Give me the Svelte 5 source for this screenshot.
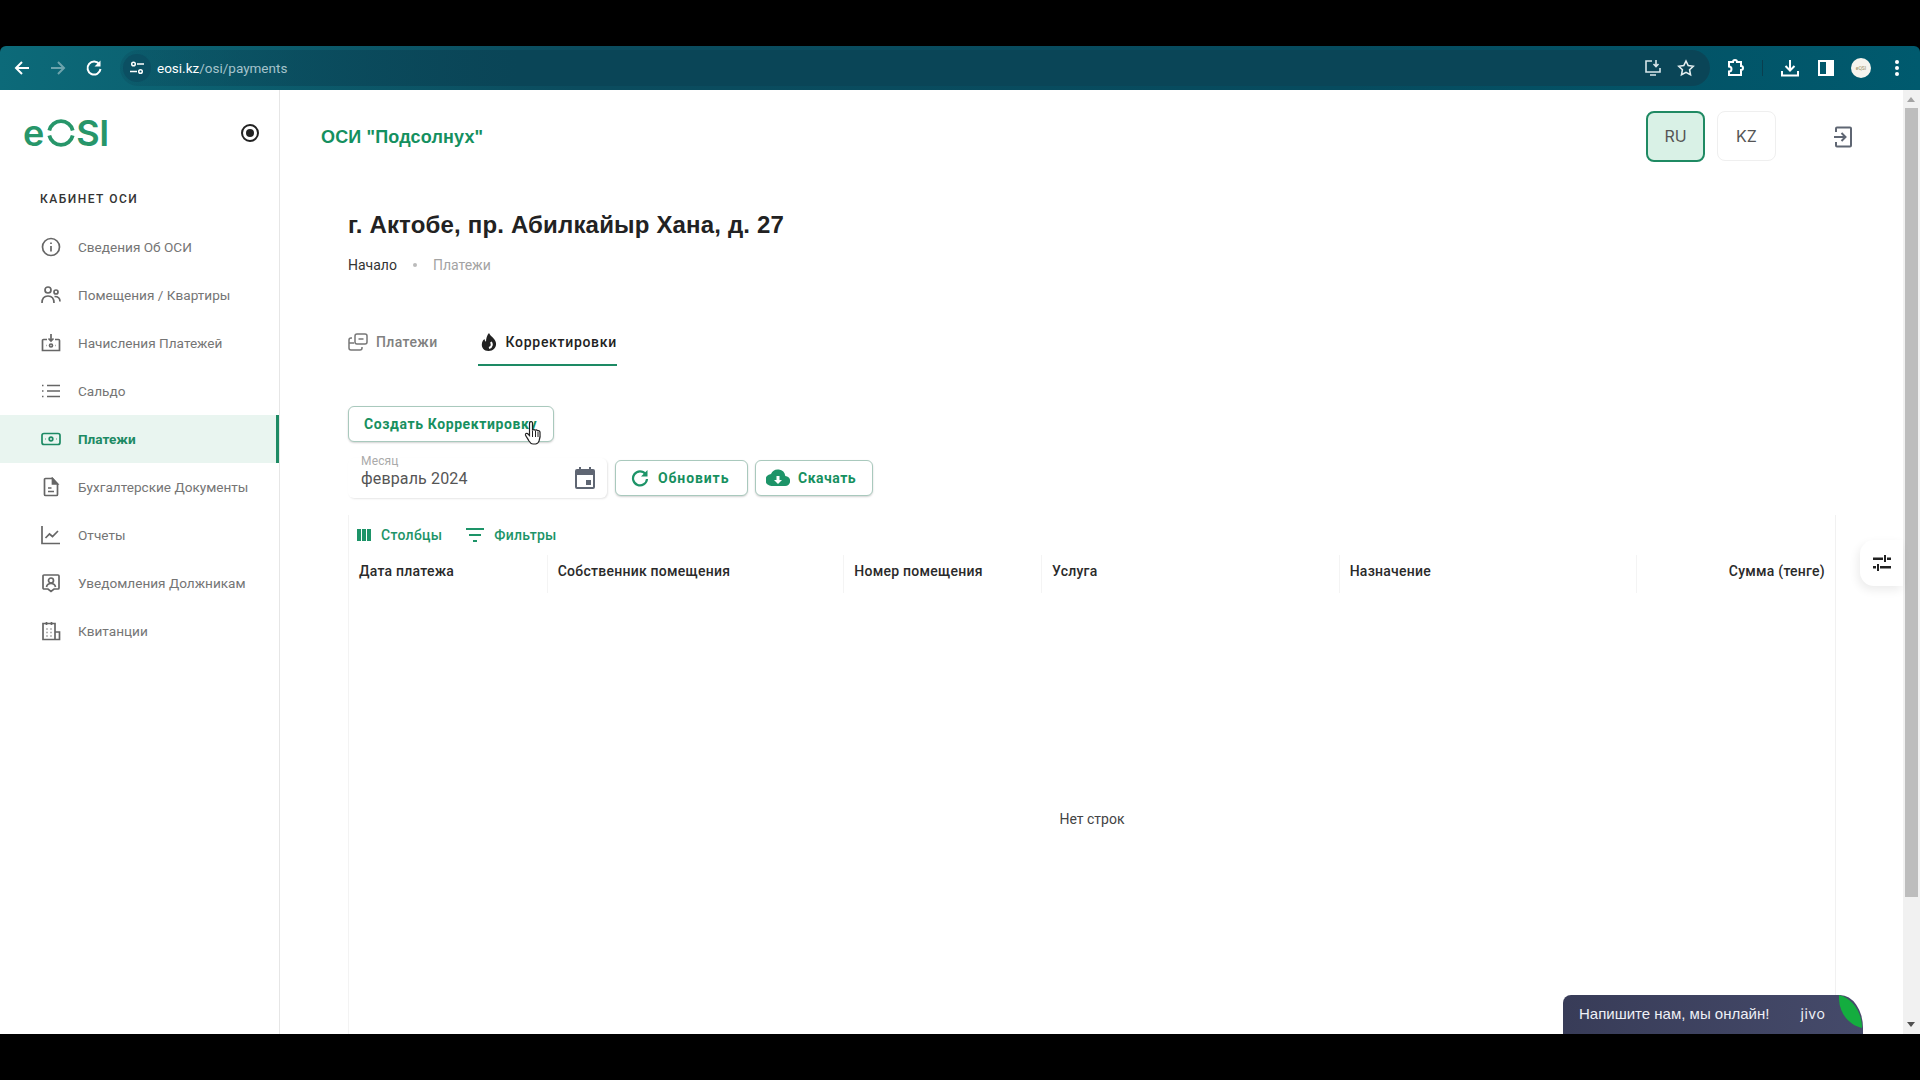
<script>
  const navItems = [
    { label: 'Сведения Об ОСИ', icon: 'info' },
    { label: 'Помещения / Квартиры', icon: 'people' },
    { label: 'Начисления Платежей', icon: 'accrual' },
    { label: 'Сальдо', icon: 'list' },
    { label: 'Платежи', icon: 'money', active: true },
    { label: 'Бухгалтерские Документы', icon: 'doc' },
    { label: 'Отчеты', icon: 'chart' },
    { label: 'Уведомления Должникам', icon: 'notice' },
    { label: 'Квитанции', icon: 'receipt' }
  ];

  const columns = [
    { label: 'Дата платежа', width: 199 },
    { label: 'Собственник помещения', width: 297 },
    { label: 'Номер помещения', width: 198 },
    { label: 'Услуга', width: 298 },
    { label: 'Назначение', width: 298 },
    { label: 'Сумма (тенге)', width: 198, right: true }
  ];
</script>

<div class="screen">
  <div class="letterbox"></div>

  <div class="chrome">
    <div class="nav-btns">
      <svg width="18" height="18" viewBox="0 0 18 18"><path d="M16 9H3M9 3 3 9l6 6" fill="none" stroke="#fff" stroke-width="2"/></svg>
      <svg class="dim" width="18" height="18" viewBox="0 0 18 18"><path d="M2 9h13M9 3l6 6-6 6" fill="none" stroke="#fff" stroke-width="2"/></svg>
      <svg width="18" height="18" viewBox="0 0 18 18"><path d="M14.5 5.5A6.5 6.5 0 1 0 15.5 10" fill="none" stroke="#fff" stroke-width="2"/><path d="M15.5 1.5v6h-6z" fill="#fff"/></svg>
    </div>
    <div class="omnibox">
      <span class="site-chip">
        <svg width="14" height="14" viewBox="0 0 14 14" fill="none" stroke="#fff" stroke-width="1.5"><circle cx="3.5" cy="3" r="1.8"/><path d="M7 3h7M0 10.500h7"/><circle cx="10.500" cy="10.500" r="1.800"/></svg>
      </span>
      <span class="url"><b>eosi.kz</b>/osi/payments</span>
      <div class="omni-right">
        <svg width="18" height="18" viewBox="0 0 18 18" fill="none" stroke="#d8e6ea" stroke-width="1.600"><path d="M8 2H2v11h14V9M6 16h6M12 1v6M9.500 5l2.500 2.500L14.500 5"/></svg>
        <svg width="18" height="18" viewBox="0 0 18 18" fill="none" stroke="#e4eef0" stroke-width="1.600"><path d="m9 2 2.200 4.600 5 .7-3.600 3.500.9 5L9 13.400l-4.500 2.400.9-5-3.600-3.500 5-.7z"/></svg>
      </div>
    </div>
    <div class="chrome-right">
      <svg width="18" height="18" viewBox="0 0 18 18" fill="none" stroke="#fff" stroke-width="2"><path d="M2 3h4a2 2 0 0 1 4 0h4v4a2 2 0 0 1 0 4v5H2v-3.500a2 2 0 0 0 0-5z" transform="translate(1 0)"/></svg>
      <span class="chrome-sep"></span>
      <svg width="18" height="18" viewBox="0 0 18 18" fill="none" stroke="#fff" stroke-width="2"><path d="M9 1v10M4.500 7 9 11.500 13.500 7M1 12v4.500h16V12"/></svg>
      <svg class="panel-icon" width="16" height="16" viewBox="0 0 16 16"><path d="M1 1h14v14H1z" fill="none" stroke="#fff" stroke-width="2"/><path d="M8 1h7v14H8z" fill="#fff"/></svg>
      <span class="avatar">eQSI</span>
      <svg class="kebab" width="4" height="16" viewBox="0 0 4 16" fill="#fff"><circle cx="2" cy="2" r="2"/><circle cx="2" cy="8" r="2"/><circle cx="2" cy="14" r="2"/></svg>
    </div>
  </div>

  <div class="app">
    <aside class="sidebar">
      <div class="brand">
        <div class="logo">
          <span>e</span>
          <svg width="28" height="28" viewBox="0 0 28 28" fill="none" stroke="#27966a" stroke-width="3.800"><path d="M2.300 11.500A12 12 0 0 1 25.700 11.500M25.700 16.500A12 12 0 0 1 2.300 16.500"/></svg>
          <span>SI</span>
        </div>
        <span class="toggle"><i></i></span>
      </div>
      <div class="section-title">КАБИНЕТ ОСИ</div>
      <nav>
        {#each navItems as item}
          <div class="nav-item" class:active={item.active}>
            <svg class="nav-icon" width="20" height="20" viewBox="0 0 20 20" fill="none" stroke="currentColor" stroke-width="1.700">
              {#if item.icon === 'info'}
                <circle cx="10" cy="10" r="8.500"/><path d="M10 9v5.500M10 5.500v1.500"/>
              {:else if item.icon === 'people'}
                <circle cx="7" cy="5" r="3"/><circle cx="15" cy="7" r="2"/><path d="M1 18c0-4.500 2.500-7 6-7s6 2.500 6 7M13.500 11.500c3 0 5.500 1.500 5.500 5"/>
              {:else if item.icon === 'accrual'}
                <path d="M6 6.500H2.500a1 1 0 0 0-1 1v10h17v-10a1 1 0 0 0-1-1H14M10 1v7M7.500 5.500 10 8l2.500-2.500"/><circle cx="10" cy="12.500" r="1.500"/><path d="M5 12.500h.5M14.500 12.500h.5"/>
              {:else if item.icon === 'list'}
                <path d="M6 4.500h13M6 10h13M6 15.500h13M1 4.500h1.500M1 10h1.500M1 15.500h1.500"/>
              {:else if item.icon === 'money'}
                <rect x="1" y="4.500" width="18" height="11" rx="2"/><circle cx="10" cy="10" r="1.800"/><path d="M4.500 10H5M15 10h.5"/>
              {:else if item.icon === 'doc'}
                <path d="M3.500 2.500a1 1 0 0 1 1-1h7L16.500 7v10.500a1 1 0 0 1-1 1h-11a1 1 0 0 1-1-1zM7 11h3.500M7 14.500h6"/><path d="M11.500 1.500 16.500 7h-5z" fill="currentColor"/>
              {:else if item.icon === 'chart'}
                <path d="M1 1v17.500h18M4.500 13l4-4 3 2.500L17 6"/>
              {:else if item.icon === 'notice'}
                <path d="M3 2h14a1 1 0 0 1 1 1v12a1 1 0 0 1-1 1h-4l-3 2.500L7 16H3a1 1 0 0 1-1-1V3a1 1 0 0 1 1-1z"/><circle cx="10" cy="7.500" r="2.500"/><path d="M5.500 14c.5-2.500 2-3.500 4.500-3.500s4 1 4.500 3.500"/>
              {:else}
                <path d="M2 2.500h12v16H2zM5.500 1v3M10.500 1v3M14 11h4.500v7.500H14M5.500 8h1M9.500 8h1M5.500 11.500h1M9.500 11.500h1M5.500 15h1M9.500 15h1"/>
              {/if}
            </svg>
            <span>{item.label}</span>
          </div>
        {/each}
      </nav>
    </aside>

    <main class="content">
      <header class="topbar">
        <div class="org">ОСИ "Подсолнух"</div>
        <div class="langs">
          <button class="lang selected">RU</button>
          <button class="lang">KZ</button>
        </div>
        <svg class="logout" width="20" height="22" viewBox="0 0 20 22" fill="none" stroke="#5f6673" stroke-width="2"><path d="M3 6V2.500a1 1 0 0 1 1-1h13a1 1 0 0 1 1 1v17a1 1 0 0 1-1 1H4a1 1 0 0 1-1-1V16M1 11h11M8.500 7l4 4-4 4"/></svg>
      </header>

      <div class="page">
        <h1>г. Актобе, пр. Абилкайыр Хана, д. 27</h1>
        <div class="crumbs">
          <span>Начало</span>
          <i></i>
          <span class="muted">Платежи</span>
        </div>

        <div class="tabs">
          <div class="tab">
            <svg width="20" height="20" viewBox="0 0 20 20" fill="none" stroke="#777" stroke-width="1.500"><rect x="7" y="2" width="12" height="10" rx="2"/><path d="M10.500 7h5M4 6H3a2 2 0 0 0-2 2v8a2 2 0 0 0 2 2h9a2 2 0 0 0 2-2v-1M1 11h5"/></svg>
            <span>Платежи</span>
          </div>
          <div class="tab current">
            <svg width="18" height="20" viewBox="0 0 18 20"><path d="M9 1c1 3 6 5 7 10 .6 4.500-3 8-7.500 8S1 15.500 2 11c.4-1.800 1.400-3.200 2.500-4 .2 1.500.8 2.300 1.500 2.800C6 6.500 7 3 9 1z" fill="#222"/><path d="M11 10c1 2 1.500 5-2 6" fill="none" stroke="#fff" stroke-width="2"/></svg>
            <span>Корректировки</span>
          </div>
        </div>

        <button class="btn create">Создать Корректировку</button>

        <div class="filters">
          <div class="date-field">
            <label for="month">Месяц</label>
            <span id="month">февраль 2024</span>
            <svg width="20" height="22" viewBox="0 0 20 22"><path d="M2 3h16a1 1 0 0 1 1 1v16a1 1 0 0 1-1 1H2a1 1 0 0 1-1-1V4a1 1 0 0 1 1-1z" fill="none" stroke="#5f6673" stroke-width="2"/><path d="M1 3h18v5H1zM4 0h2v4H4zM14 0h2v4h-2zM11 13h5v5h-5z" fill="#5f6673"/></svg>
          </div>
          <button class="btn refresh">
            <svg width="18" height="18" viewBox="0 0 18 18"><path d="M14.500 5A7 7 0 1 0 16 10" fill="none" stroke="#1d9468" stroke-width="2.200"/><path d="M16.500 1v6.500H10z" fill="#1d9468"/></svg>
            Обновить
          </button>
          <button class="btn download">
            <svg width="24" height="18" viewBox="0 0 24 18"><path d="M19.300 7A7.500 7.500 0 0 0 5 5 6 6 0 0 0 6 17h13a5 5 0 0 0 .3-10z" fill="#1d9468"/><path d="M10.500 7h3v4h2.500L12 15l-4-4h2.500z" fill="#fff"/></svg>
            Скачать
          </button>
        </div>

        <div class="grid">
          <div class="toolbar">
            <span class="tool">
              <svg width="14" height="12" viewBox="0 0 14 12" fill="#1d9468"><path d="M0 0h4v12H0zM5 0h4v12H5zM10 0h4v12h-4z"/></svg>
              Столбцы
            </span>
            <span class="tool">
              <svg width="18" height="14" viewBox="0 0 18 14" fill="#1d9468"><path d="M0 0h18v2H0zM3 6h12v2H3zM7 12h4v2H7z"/></svg>
              Фильтры
            </span>
          </div>
          <div class="grid-head">
            {#each columns as col}
              <div class="col" class:right={col.right} style="width: {col.width}px">{col.label}</div>
            {/each}
          </div>
          <div class="grid-body">Нет строк</div>
        </div>
      </div>
    </main>

    <div class="scrollbar">
      <span class="arrow up"></span>
      <span class="thumb"></span>
      <span class="arrow down"></span>
    </div>

    <div class="settings-tab">
      <svg width="18" height="16" viewBox="0 0 18 16" fill="#222"><path d="M0 2.500h10v2.500H0zM14 2.500h4v2.500h-4zM11 0h2v7h-2zM0 11h3v2.500H0zM7 11h11v2.500H7zM4 9h2v7H4z"/></svg>
    </div>

    <div class="jivo">
      <span>Напишите нам, мы онлайн!</span>
      <span class="jivo-logo">jivo</span>
      <svg class="leaf" width="24" height="40" viewBox="0 0 24 40"><path d="M0 0C13 3 23 17 23 33 10 30-1 18 0 0z" fill="#14ad3f"/></svg>
    </div>

    <svg class="cursor" width="20" height="26" viewBox="0 0 20 26"><path d="M6 2c1.200-1 2.500 0 2.500 1v7c1-.6 2-.6 2.600.2 1-.5 1.900-.3 2.400.5 1-.3 2.300.2 2.500 1.500.3 2.500.2 5.500-.8 8.300-.3 1.500-1.500 3-3.500 3.500H9c-2 0-3-1.300-4-3-1-2-3-4.500-3.500-6-.4-1.300 1-2 2-1.400l2 1.900V3.500C5.500 3 5.600 2.400 6 2z" fill="#fff" stroke="#222" stroke-width="1.200"/><path d="M8.500 11v6M11.500 11v6M14 12v5" stroke="#222" fill="none"/></svg>
  </div>

  <div class="letterbox"></div>
</div>

<style>
  :global(body) {
    margin: 0;
    background: #000;
  }

  .screen {
    width: 1920px;
    height: 1080px;
    display: flex;
    flex-direction: column;
    overflow: hidden;
    font-family: Roboto, "Liberation Sans", sans-serif;
  }

  .letterbox {
    height: 46px;
    background: #000;
    flex: none;
  }

  .chrome {
    height: 44px;
    flex: none;
    display: flex;
    align-items: center;
    background: linear-gradient(90deg, #0c6a79 0%, #0b4c5e 30%, #064b5e 70%, #005a6e 100%);
    border-top-left-radius: 6px;
    border-top-right-radius: 6px;
  }

  .nav-btns {
    display: flex;
    gap: 18px;
    padding-left: 13px;
    width: 107px;
  }

  .nav-btns .dim {
    opacity: .4;
  }

  .omnibox {
    width: 1590px;
    height: 36px;
    border-radius: 18px;
    display: flex;
    align-items: center;
    background: linear-gradient(90deg, rgba(10, 69, 87, .25), #0a4557 25%);
    color: #fff;
  }

  .site-chip {
    width: 28px;
    height: 28px;
    margin-left: 3px;
    border-radius: 50%;
    background: #0b4f62;
    display: flex;
    align-items: center;
    justify-content: center;
  }

  .url {
    margin-left: 6px;
    font-size: 13.5px;
    color: #a5c3cc;
  }

  .url b {
    font-weight: 400;
    color: #fff;
  }

  .omni-right {
    margin-left: auto;
    display: flex;
    gap: 15px;
    padding-right: 15px;
  }

  .chrome-right {
    display: flex;
    align-items: center;
    margin-left: 16px;
    gap: 19px;
  }

  .chrome-sep {
    width: 1px;
    height: 16px;
    background: #0a3f4f;
    margin: 0 -1px;
  }

  .panel-icon {
    margin: 0 -2px 0 0;
  }

  .kebab {
    margin-left: 5px;
  }

  .avatar {
    width: 20px;
    height: 20px;
    border-radius: 50%;
    background: #f6f4ee;
    color: #9a8f60;
    font-size: 5px;
    display: flex;
    align-items: center;
    justify-content: center;
  }

  .app {
    position: relative;
    height: 944px;
    flex: none;
    display: flex;
    background: #fff;
    overflow: hidden;
  }

  .sidebar {
    width: 279px;
    flex: none;
    border-right: 1px solid #e6e6e6;
  }

  .brand {
    display: flex;
    align-items: center;
    justify-content: space-between;
    padding: 25px 20px 0 23px;
    height: 36px;
  }

  .logo {
    display: flex;
    align-items: center;
    gap: 3px;
    color: #27966a;
    font-family: Inter, sans-serif;
    font-size: 36px;
    font-weight: 600;
    line-height: 36px;
    height: 36px;
  }

  .logo span:last-child {
    margin-left: -2px;
    letter-spacing: -.5px;
  }

  .toggle {
    width: 14px;
    height: 14px;
    border: 2px solid #222;
    border-radius: 50%;
    display: flex;
    align-items: center;
    justify-content: center;
  }

  .toggle i {
    width: 8px;
    height: 8px;
    background: #222;
    border-radius: 50%;
  }

  .section-title {
    margin: 38px 0 0 40px;
    height: 20px;
    font-size: 12px;
    font-weight: 500;
    line-height: 20px;
    letter-spacing: 1.5px;
    color: #333;
  }

  nav {
    margin-top: 14px;
  }

  .nav-item {
    height: 48px;
    display: flex;
    align-items: center;
    padding-left: 41px;
    gap: 17px;
    font-size: 13.6px;
    color: #757575;
    box-sizing: border-box;
  }

  .nav-icon {
    flex: none;
    color: #666;
  }

  .nav-item.active {
    background: #e9f5f0;
    border-right: 3px solid #1d8a64;
    color: #1d8a64;
    font-weight: 700;
  }

  .nav-item.active .nav-icon {
    color: #1d8a64;
  }

  .content {
    flex: 1;
    min-width: 0;
  }

  .topbar {
    height: 94px;
    display: flex;
    align-items: center;
    padding-left: 41px;
  }

  .org {
    font-family: "Liberation Sans", sans-serif;
    font-size: 18px;
    font-weight: 700;
    letter-spacing: .15px;
    color: #14905f;
  }

  .langs {
    margin-left: auto;
    display: flex;
    gap: 12px;
    align-items: flex-start;
    margin-top: -2px;
  }

  .lang {
    width: 59px;
    height: 50px;
    box-sizing: border-box;
    border: 1px solid #efefef;
    border-radius: 8px;
    background: #fff;
    color: #555;
    font-family: Inter, sans-serif;
    font-size: 16px;
    padding: 0;
  }

  .lang.selected {
    height: 51px;
    background: #d9f1e6;
    border: 2px solid #1f8a63;
  }

  .logout {
    margin: 0 67px 0 57px;
  }

  .page {
    padding: 0 0 0 68px;
    width: 1488px;
  }

  h1 {
    margin: 26px 0 0;
    font-family: "Liberation Sans", sans-serif;
    font-size: 24px;
    line-height: 30px;
    font-weight: 700;
    letter-spacing: .17px;
    color: #222;
  }

  .crumbs {
    margin-top: 15px;
    display: flex;
    align-items: center;
    gap: 16px;
    font-size: 14px;
    line-height: 20px;
    color: #333;
  }

  .crumbs i {
    width: 4px;
    height: 4px;
    border-radius: 50%;
    background: #bbb;
  }

  .muted {
    color: #a3a3a3;
  }

  .tabs {
    display: flex;
    gap: 40px;
    margin-top: 45px;
  }

  .tab {
    height: 46px;
    padding-bottom: 2px;
    box-sizing: border-box;
    display: flex;
    align-items: center;
    gap: 8px;
    font-size: 14px;
    font-weight: 500;
    letter-spacing: .4px;
    color: #808080;
  }

  .tab.current {
    color: #222;
    letter-spacing: .7px;
    border-bottom: 2px solid #1d8a64;
    padding: 0 0 0 2px;
  }

  .btn {
    display: inline-flex;
    align-items: center;
    box-sizing: border-box;
    background: #fff;
    border: 1px solid #a9c9bd;
    border-radius: 6px;
    color: #17905f;
    font-family: Roboto, sans-serif;
    font-size: 14px;
    font-weight: 700;
    letter-spacing: .5px;
    box-shadow: 0 1px 2px rgba(0, 0, 0, .18);
  }

  .create {
    display: flex;
    width: 206px;
    height: 36px;
    margin-top: 40px;
    padding: 0 0 0 15px;
    letter-spacing: .6px;
    white-space: nowrap;
    overflow: hidden;
  }

  .filters {
    display: flex;
    align-items: center;
    gap: 8px;
    margin-top: 16px;
  }

  .date-field {
    position: relative;
    width: 259px;
    height: 40px;
    box-sizing: border-box;
    padding: 0 12px 0 13px;
    display: flex;
    align-items: center;
    justify-content: space-between;
    border-radius: 6px;
    box-shadow: 1px 1px 2px rgba(0, 0, 0, .1);
    font-size: 16px;
    letter-spacing: .15px;
    color: #555;
  }

  .date-field label {
    position: absolute;
    top: -4px;
    left: 13px;
    font-size: 12px;
    color: #aaa;
    background: #fff;
  }

  .refresh {
    width: 133px;
    height: 36px;
    padding-left: 15px;
    gap: 9px;
    letter-spacing: .9px;
  }

  .download {
    width: 118px;
    height: 36px;
    padding-left: 10px;
    gap: 8px;
    margin-left: -1px;
  }

  .grid {
    margin-top: 17px;
    border-right: 1px solid #f1f1f1;
    border-left: 1px solid #f3f3f3;
  }

  .toolbar {
    height: 40px;
    display: flex;
    align-items: center;
    gap: 24px;
    padding-left: 8px;
  }

  .tool {
    display: flex;
    align-items: center;
    gap: 10px;
    font-size: 14px;
    font-weight: 500;
    letter-spacing: .3px;
    color: #1d9468;
  }

  .grid-head {
    display: flex;
    height: 38px;
    align-items: center;
  }

  .col {
    height: 38px;
    line-height: 32px;
    box-sizing: border-box;
    padding: 0 10px;
    font-size: 14px;
    font-weight: 500;
    letter-spacing: .25px;
    color: #2a2a2a;
    border-right: 1px solid #f4f4f4;
  }

  .col.right {
    text-align: right;
    border-right: 0;
  }

  .grid-body {
    height: 482px;
    display: flex;
    align-items: center;
    justify-content: center;
    font-size: 14px;
    color: #444;
    padding-bottom: 30px;
    box-sizing: border-box;
  }

  .scrollbar {
    position: absolute;
    top: 0;
    right: 0;
    bottom: 0;
    width: 17px;
    background: #f1f1f1;
  }

  .thumb {
    position: absolute;
    top: 18px;
    left: 2px;
    width: 13px;
    height: 789px;
    background: #bdbdbd;
  }

  .arrow {
    position: absolute;
    left: 4px;
    width: 0;
    height: 0;
    border-left: 4px solid transparent;
    border-right: 4px solid transparent;
  }

  .arrow.up {
    top: 7px;
    border-bottom: 5px solid #a3a3a3;
  }

  .arrow.down {
    bottom: 7px;
    border-top: 5px solid #505050;
  }

  .settings-tab {
    position: absolute;
    top: 450px;
    right: 17px;
    width: 43px;
    height: 46px;
    display: flex;
    align-items: center;
    justify-content: center;
    background: #fff;
    border-radius: 14px 0 0 14px;
    box-shadow: -2px 4px 10px rgba(0, 0, 0, .08);
  }

  .jivo {
    position: absolute;
    left: 1563px;
    bottom: 0;
    width: 300px;
    height: 39px;
    display: flex;
    align-items: center;
    background: linear-gradient(90deg, #383c58, #454a6a);
    border-radius: 8px 23px 0 0 / 8px 33px 0 0;
    overflow: hidden;
    color: #eef0f6;
    font-family: "Liberation Sans", sans-serif;
    font-size: 15px;
    padding-left: 16px;
    box-sizing: border-box;
    padding-bottom: 3px;
  }

  .jivo-logo {
    margin-left: 31px;
    font-family: Inter, sans-serif;
    font-size: 14px;
    letter-spacing: .6px;
  }

  .leaf {
    position: absolute;
    right: 0;
    top: 0;
  }

  .cursor {
    position: absolute;
    left: 524px;
    top: 330px;
  }
</style>
